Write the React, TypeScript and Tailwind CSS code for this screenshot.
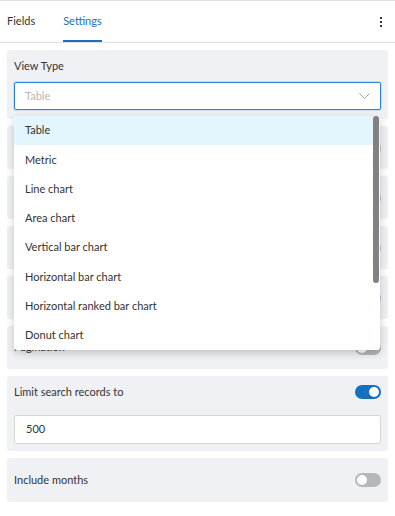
const options = [
    'Table',
    'Metric',
    'Line chart',
    'Area chart',
    'Vertical bar chart',
    'Horizontal bar chart',
    'Horizontal ranked bar chart',
    'Donut chart',
];

const Toggle = ({ on = false }: { on?: boolean }) => (
    <div
        className={
            on
                ? 'w-[26px] h-[14px] rounded-full bg-[#1570c2] flex items-center justify-end px-[2px]'
                : 'w-[26px] h-[14px] rounded-full bg-[#b6b7ba] flex items-center justify-start px-[2px]'
        }
    >
        <div className="w-[10px] h-[10px] rounded-full bg-white"></div>
    </div>
);

// labels of the cards hidden under the open menu are not visible
const ToggleCard = ({ label = '', on = false }: { label?: string; on?: boolean }) => (
    <div className="h-[43px] bg-[#f0f1f5] rounded-[3px] px-[7px] flex items-center justify-between">
        <span className="text-[11px] text-[#333]">{label}</span>
        <Toggle on={on} />
    </div>
);

const App = () => {
    return (
        <div className="w-[395px] h-[516px] bg-white font-['Lato',sans-serif] overflow-hidden">
            {/* Tabs */}
            <div className="border-t border-[#e2e2e2] h-[43px] border-b flex items-stretch pl-[7px] pr-[13px]">
                <div className="flex items-center text-[11px] text-[#333] mr-[28px]">Fields</div>
                <div className="flex items-center text-[11px] text-[#1a6fc0] border-b-2 border-[#1a6fc0] pt-[2px]">
                    Settings
                </div>
                <div className="ml-auto flex flex-col items-center justify-center gap-[2px]">
                    <span className="w-[2px] h-[2px] bg-[#333]"></span>
                    <span className="w-[2px] h-[2px] bg-[#333]"></span>
                    <span className="w-[2px] h-[2px] bg-[#333]"></span>
                </div>
            </div>

            <div className="flex flex-col gap-[7px] px-[7px] pt-[7px]">
                {/* View type */}
                <div className="bg-[#f0f1f5] rounded-[3px] px-[7px] pt-[7px] pb-[9px] relative">
                    <div className="text-[11px] text-[#333] h-[18px] flex items-center">View Type</div>
                    <div className="mt-[7px] h-[28px] bg-white border border-[#2a86d4] rounded-[2px] shadow-[0_0_0_1px_#c9def3] flex items-center justify-between pl-[10px] pr-[10px]">
                        <span className="text-[11px] text-[#b8b8b8]">Table</span>
                        <svg width="11" height="7" viewBox="0 0 11 7" fill="none">
                            <polyline points="0.5,0.5 5.5,5.5 10.5,0.5" stroke="#a0a0a0" strokeWidth="1" />
                        </svg>
                    </div>

                    {/* Open dropdown */}
                    <div className="absolute left-[7px] right-[8px] top-[66px] z-10 bg-white rounded-b-[3px] shadow-[0_3px_8px_rgba(0,0,0,0.2)]">
                        {options.map((o, i) => (
                            <div
                                key={o}
                                className={
                                    i === 0
                                        ? 'h-[29.25px] flex items-center pl-[11px] text-[11px] text-[#333] bg-[#e3f6fe]'
                                        : 'h-[29.25px] flex items-center pl-[11px] text-[11px] text-[#333]'
                                }
                            >
                                {o}
                            </div>
                        ))}
                        <div className="absolute right-[1px] top-[0px] w-[6px] h-[167px] rounded-full bg-[#818181]"></div>
                    </div>
                </div>

                <ToggleCard />
                <ToggleCard />
                <ToggleCard />
                <ToggleCard />
                <ToggleCard label="Pagination" />

                {/* Limit search records */}
                <div className="bg-[#f0f1f5] rounded-[3px] px-[7px] pt-[9px] pb-[7px]">
                    <div className="flex items-center justify-between h-[14px]">
                        <span className="text-[11px] text-[#333]">Limit search records to</span>
                        <Toggle on />
                    </div>
                    <div className="mt-[16px] h-[29px] bg-white border border-[#d6d6d6] rounded-[2px] flex items-center px-[11px] text-[11px] text-[#333]">
                        500
                    </div>
                </div>

                <div className="h-[44px] bg-[#f0f1f5] rounded-[3px] px-[7px] flex items-center justify-between">
                    <span className="text-[11px] text-[#333]">Include months</span>
                    <Toggle />
                </div>
            </div>
        </div>
    );
};

export default App;
